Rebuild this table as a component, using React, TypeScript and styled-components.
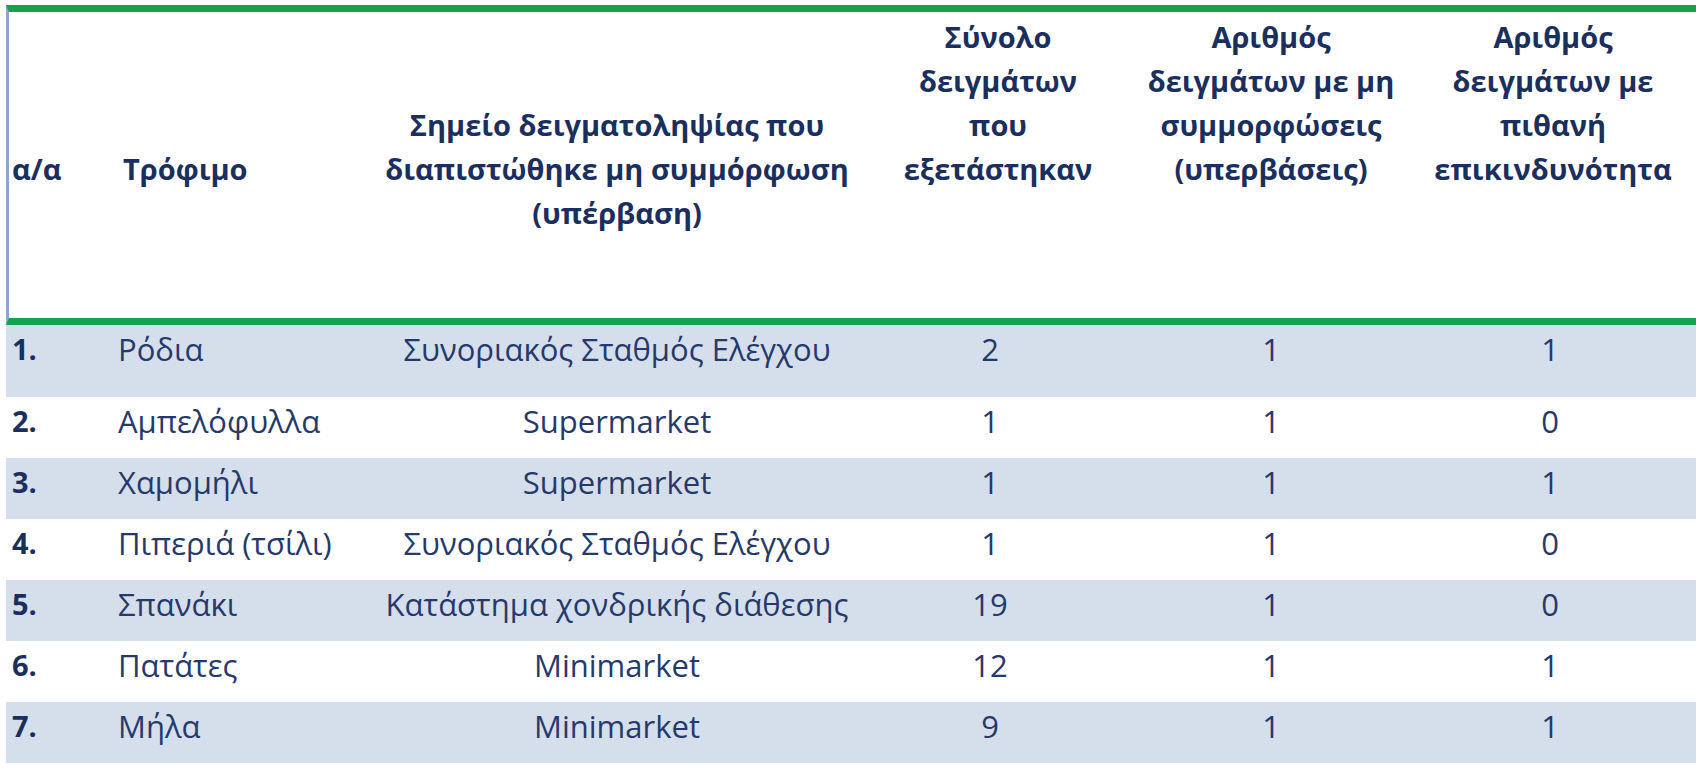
import React from "react";
import styled, { createGlobalStyle } from "styled-components";

const Global = createGlobalStyle`
  html, body {
    margin: 0;
    padding: 0;
    background: #ffffff;
    overflow: hidden;
  }
  body {
    font-family: "Open Sans", "Noto Sans", "Liberation Sans", sans-serif;
  }
`;

const Page = styled.div`
  width: 1696px;
  height: 776px;
  padding: 5px 0 0 6px;
  box-sizing: border-box;
  overflow: hidden;
`;

const Table = styled.table`
  width: 1690px;
  table-layout: fixed;
  border-collapse: separate;
  border-spacing: 0;
  color: #23386a;
`;

const HeadRow = styled.tr`
  height: 320px;
`;

type Align = "left" | "center";

const HeadCell = styled.th<{ $align?: Align; $top?: boolean; $first?: boolean; $pad?: number }>`
  box-sizing: border-box;
  border-top: 7px solid #15a24c;
  border-bottom: 7px solid #15a24c;
  border-left: ${(p) => (p.$first ? "3px solid #8ba6d2" : "none")};
  padding: ${(p) => (p.$top ? "3px 0 0" : "8px 0 0")};
  padding-left: ${(p) => (p.$pad ?? 0)}px;
  text-align: ${(p) => p.$align ?? "center"};
  vertical-align: ${(p) => (p.$top ? "top" : "middle")};
  font-size: 29px;
  font-weight: 700;
  line-height: 44px;
  color: #1b2f5f;
  white-space: nowrap;
`;

const BodyRow = styled.tr<{ $band: boolean; $tall?: boolean }>`
  height: ${(p) => (p.$tall ? 72 : 61)}px;
  background: ${(p) => (p.$band ? "#d5dfeb" : "#ffffff")};
`;

const Cell = styled.td<{ $align?: Align; $bold?: boolean; $pad?: number; $right?: number }>`
  padding: 2px ${(p) => (p.$right ?? 0)}px 0 ${(p) => (p.$pad ?? 0)}px;
  text-align: ${(p) => p.$align ?? "center"};
  vertical-align: top;
  font-size: ${(p) => (p.$bold ? 29 : 31)}px;
  line-height: 44px;
  font-weight: ${(p) => (p.$bold ? 700 : 400)};
  color: ${(p) => (p.$bold ? "#1b2f5f" : "#26396b")};
  white-space: nowrap;
`;

const rows = [
  ["1.", "Ρόδια", "Συνοριακός Σταθμός Ελέγχου", "2", "1", "1"],
  ["2.", "Αμπελόφυλλα", "Supermarket", "1", "1", "0"],
  ["3.", "Χαμομήλι", "Supermarket", "1", "1", "1"],
  ["4.", "Πιπεριά (τσίλι)", "Συνοριακός Σταθμός Ελέγχου", "1", "1", "0"],
  ["5.", "Σπανάκι", "Κατάστημα χονδρικής διάθεσης", "19", "1", "0"],
  ["6.", "Πατάτες", "Minimarket", "12", "1", "1"],
  ["7.", "Μήλα", "Minimarket", "9", "1", "1"],
];

export default function App() {
  return (
    <>
      <Global />
      <Page>
        <Table>
          <colgroup>
            <col style={{ width: 104 }} />
            <col style={{ width: 260 }} />
            <col style={{ width: 494 }} />
            <col style={{ width: 268 }} />
            <col style={{ width: 278 }} />
            <col style={{ width: 286 }} />
          </colgroup>
          <thead>
            <HeadRow>
              <HeadCell $first $align="left" $pad={3}>
                α/α
              </HeadCell>
              <HeadCell $align="left" $pad={13}>
                Τρόφιμο
              </HeadCell>
              <HeadCell>
                Σημείο δειγματοληψίας που
                <br />
                διαπιστώθηκε μη συμμόρφωση
                <br />
                (υπέρβαση)
              </HeadCell>
              <HeadCell $top>
                Σύνολο
                <br />
                δειγμάτων
                <br />
                που
                <br />
                εξετάστηκαν
              </HeadCell>
              <HeadCell $top>
                Αριθμός
                <br />
                δειγμάτων με μη
                <br />
                συμμορφώσεις
                <br />
                (υπερβάσεις)
              </HeadCell>
              <HeadCell $top>
                Αριθμός
                <br />
                δειγμάτων με
                <br />
                πιθανή
                <br />
                επικινδυνότητα
              </HeadCell>
            </HeadRow>
          </thead>
          <tbody>
            {rows.map((r, i) => (
              <BodyRow key={r[0]} $band={i % 2 === 0} $tall={i === 0}>
                <Cell $align="left" $bold $pad={6}>
                  {r[0]}
                </Cell>
                <Cell $align="left" $pad={8}>
                  {r[1]}
                </Cell>
                <Cell>{r[2]}</Cell>
                <Cell $right={16}>{r[3]}</Cell>
                <Cell>{r[4]}</Cell>
                <Cell $right={6}>{r[5]}</Cell>
              </BodyRow>
            ))}
          </tbody>
        </Table>
      </Page>
    </>
  );
}
